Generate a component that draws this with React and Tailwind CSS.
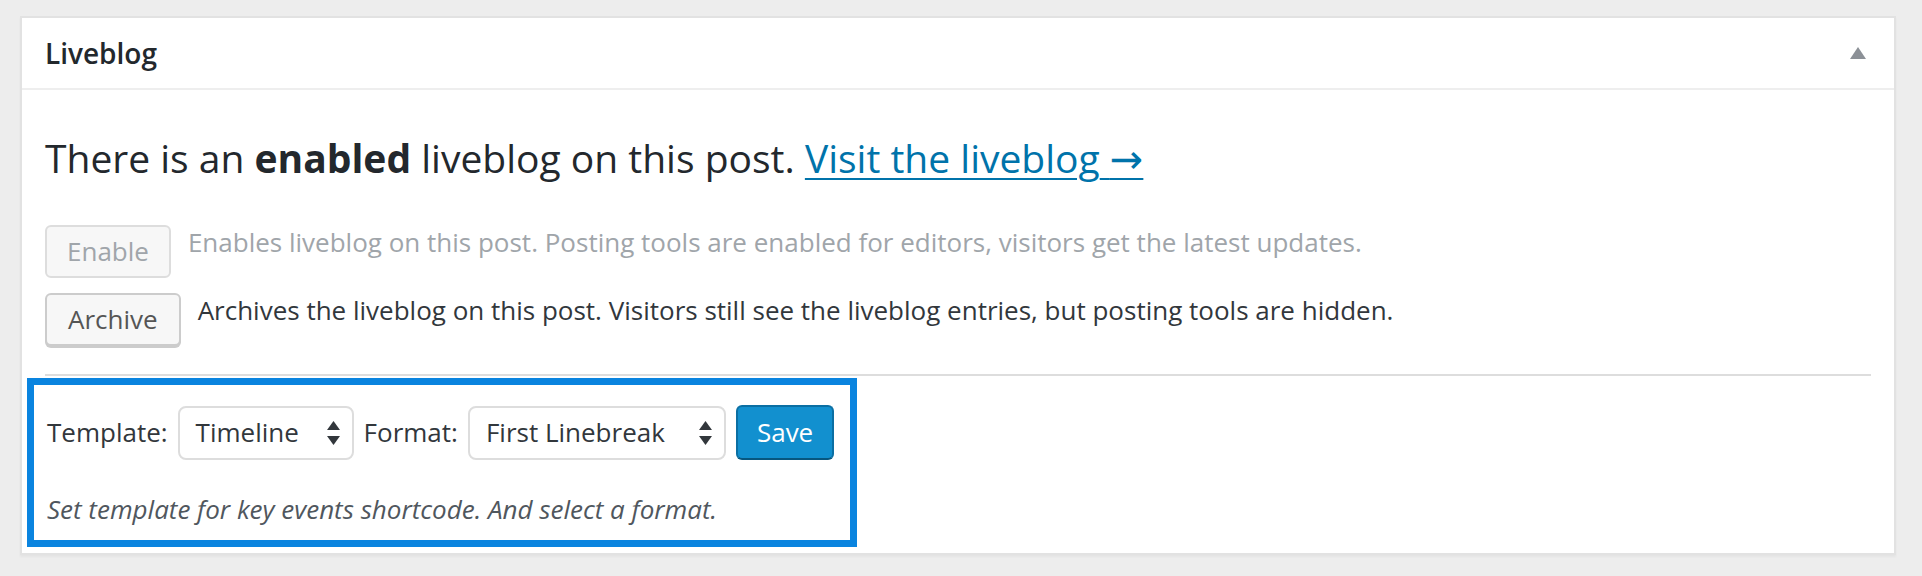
import React from "react";

const SelectArrows = () => (
  <svg width="13" height="24" viewBox="0 0 13 24" className="shrink-0">
    <path d="M6.5 0 L13 9 L0 9 Z" fill="#32373c" />
    <path d="M0 15 L13 15 L6.5 24 Z" fill="#32373c" />
  </svg>
);

const FakeSelect = ({ label, width }) => (
  <div
    className={`flex h-[54px] items-center justify-between rounded-[8px] border-2 border-[#dddddd] bg-white pl-[16px] pr-[12px] text-[#32373c] ${width}`}
  >
    <span>{label}</span>
    <SelectArrows />
  </div>
);

export default function App() {
  return (
    <div
      className="min-h-[576px] bg-[#ededed] pt-[16px] pl-[20px] pr-[26px]"
      style={{ fontFamily: '"Open Sans", "Noto Sans", sans-serif' }}
    >
      <div className="border-2 border-[#e2e2e2] bg-white shadow-[0_2px_2px_rgba(0,0,0,0.04)]">
        {/* header */}
        <div className="flex h-[72px] items-center justify-between border-b-2 border-[#eeeeee] pl-[23px] pr-[28px]">
          <h2 className="text-[28px] font-semibold text-[#23282d]">Liveblog</h2>
          <svg width="16" height="12" viewBox="0 0 16 12">
            <path d="M8 0 L16 12 L0 12 Z" fill="#8c9197" />
          </svg>
        </div>

        {/* body */}
        <div className="px-[23px] pt-[42px]">
          <p className="text-[39px] leading-[52px] text-[#23282d]">
            There is an <strong className="font-bold">enabled</strong> liveblog on this post.{" "}
            <a href="#" className="text-[#0073aa] underline decoration-2 underline-offset-[5px]">
              Visit the liveblog{" "}
              <span style={{ fontFamily: '"DejaVu Sans", sans-serif' }} className="text-[40px]">
                →
              </span>
            </a>
          </p>

          <div className="mt-[40px] flex items-start gap-[17px] text-[26px]">
            <button
              disabled
              className="h-[53px] rounded-[6px] border-2 border-[#dddddd] bg-[#f7f7f7] px-[20px] leading-[49px] text-[#a0a5aa]"
            >
              Enable
            </button>
            <span className="leading-[35px] text-[#a0a5aa]">
              Enables liveblog on this post. Posting tools are enabled for editors, visitors get the latest updates.
            </span>
          </div>

          <div className="mt-[15px] flex items-start gap-[17px] text-[26px]">
            <button className="h-[53px] rounded-[6px] border-2 border-[#cccccc] bg-[#f7f7f7] px-[21px] leading-[49px] text-[#555555] shadow-[0_2px_0_#cccccc]">
              Archive
            </button>
            <span className="leading-[35px] text-[#32373c]">
              Archives the liveblog on this post. Visitors still see the liveblog entries, but posting tools are hidden.
            </span>
          </div>

          <hr className="mt-[28px] border-t-2 border-[#dddddd]" />
        </div>

        {/* key events settings (highlighted) */}
        <div className="mt-[2px] mb-[6px] ml-[5px] w-[830px] border-[7px] border-[#0a84df] pl-[13px] pt-[20px] pb-[13px] text-[26px]">
          <div className="flex items-center gap-[10px] text-[#32373c]">
            <span>Template:</span>
            <FakeSelect label="Timeline" width="w-[176px]" />
            <span>Format:</span>
            <FakeSelect label="First Linebreak" width="w-[258px]" />
            <button className="h-[55px] rounded-[6px] border-2 border-[#0b6fa3] border-b-[#07577f] bg-[#1290cf] px-[19px] text-white">
              Save
            </button>
          </div>
          <p className="mt-[32px] italic leading-[35px] text-[#50575e]">
            Set template for key events shortcode. And select a format.
          </p>
        </div>
      </div>
    </div>
  );
}
